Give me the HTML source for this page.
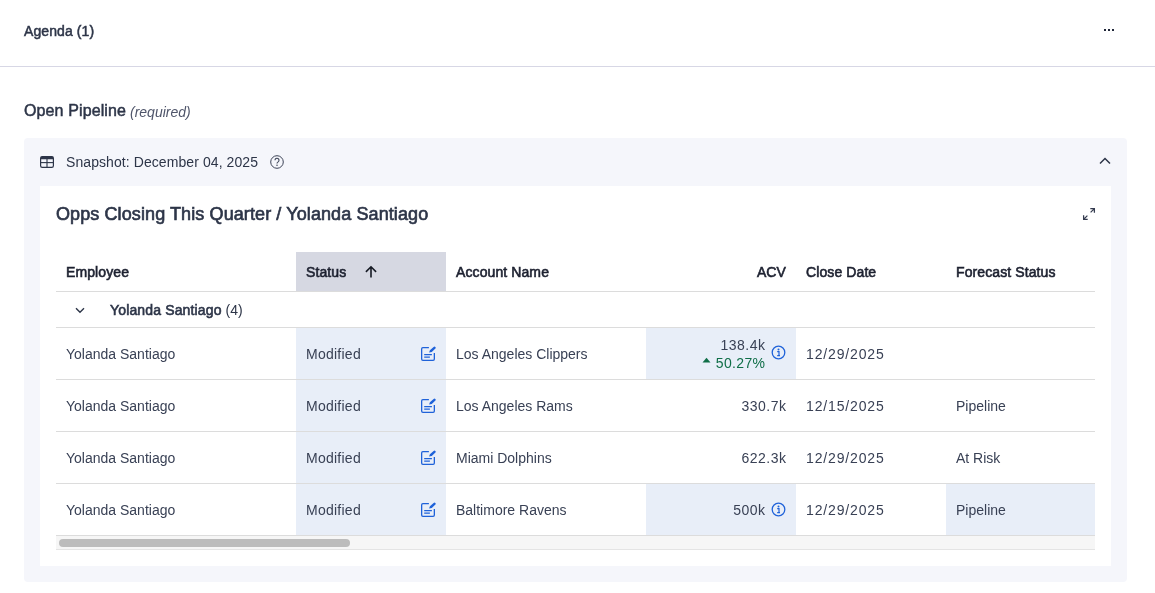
<!DOCTYPE html>
<html><head><meta charset="utf-8">
<style>
*{box-sizing:border-box;margin:0;padding:0}
html,body{width:1155px;height:593px;overflow:hidden;background:#fff;font-family:"Liberation Sans",sans-serif;color:#2d3548}
.abs{position:absolute;white-space:nowrap}
.hd{color:#1d2130;-webkit-text-stroke:0.6px #1d2130 !important}
.b{-webkit-text-stroke:0.5px currentColor;letter-spacing:0.1px}
#hdrline{position:absolute;left:0;top:66px;width:1155px;height:1px;background:#d7d7e5}
#panel{position:absolute;left:24px;top:138px;width:1103px;height:444px;background:#f5f6fb;border-radius:4px}
#card{position:absolute;left:40px;top:186px;width:1071px;height:380px;background:#fff}
.hline{position:absolute;height:1px;background:#dcdcdc}
.col{position:absolute}
.t14{font-size:14px;line-height:16px}
.c{color:#394155}
</style></head><body><div id="wrap" style="position:absolute;left:0;top:0;width:1155px;height:593px;will-change:transform">
<div class="abs b t14" style="left:24px;top:23px">Agenda (1)</div>
<svg class="abs" style="left:1103px;top:28px" width="12" height="4" viewBox="0 0 12 4"><rect x="1" y="1" width="2" height="2" fill="#1f2638"/><rect x="5" y="1" width="2" height="2" fill="#1f2638"/><rect x="9" y="1" width="2" height="2" fill="#1f2638"/></svg>
<div id="hdrline"></div>

<div class="abs b" style="left:24px;top:102px;font-size:16px;line-height:18px;letter-spacing:0.12px">Open Pipeline</div>
<div class="abs" style="left:130px;top:103px;font-size:14px;line-height:18px;font-style:italic;color:#4f556a">(required)</div>

<div id="panel"></div>
<!-- snapshot row -->
<svg class="abs" style="left:40px;top:156px" width="14" height="12" viewBox="0 0 14 12">
  <rect x="0.6" y="0.6" width="12.8" height="10.8" rx="1.6" fill="none" stroke="#2d3548" stroke-width="1.2"/>
  <path d="M0.6 3.3V2.2A1.6 1.6 0 0 1 2.2 0.6H11.8A1.6 1.6 0 0 1 13.4 2.2V3.3z" fill="#2d3548"/>
  <line x1="0.6" y1="6.6" x2="13.4" y2="6.6" stroke="#2d3548" stroke-width="1.1"/>
  <line x1="7" y1="3" x2="7" y2="11.4" stroke="#2d3548" stroke-width="1.1"/>
</svg>
<div class="abs t14" style="left:66px;top:154px;letter-spacing:0.08px">Snapshot: December 04, 2025</div>
<svg class="abs" style="left:270px;top:155px" width="14" height="14" viewBox="0 0 14 14">
  <circle cx="7" cy="7" r="6.3" fill="none" stroke="#3d4457" stroke-width="1"/>
  <path d="M5 5.3A2 2 0 1 1 8.1 6.9C7.3 7.4 7 7.8 7 8.6" fill="none" stroke="#3d4457" stroke-width="1.1"/>
  <circle cx="7" cy="10.2" r="0.75" fill="#3d4457"/>
</svg>
<svg class="abs" style="left:1099px;top:157px" width="12" height="8" viewBox="0 0 12 8">
  <polyline points="1,6.5 6,1.5 11,6.5" fill="none" stroke="#2d3548" stroke-width="1.5"/>
</svg>

<div id="card"></div>
<div class="abs b" style="left:56px;top:204px;font-size:18px;line-height:20px;-webkit-text-stroke:0.65px #2d3548;color:#2d3548">Opps Closing This Quarter / Yolanda Santiago</div>
<svg class="abs" style="left:1082px;top:207px" width="14" height="14" viewBox="0 0 14 14">
  <path d="M8.3 1.6h4.1v4.1M12.4 1.6L8.6 5.4M5.7 12.4H1.6V8.3M1.6 12.4l3.8-3.8" fill="none" stroke="#353c50" stroke-width="1.25"/>
</svg>

<!-- table -->
<div style="position:absolute;left:296px;top:252px;width:150px;height:39px;background:#d6d8e2"></div>
<div class="abs b t14 hd" style="left:66px;top:264px">Employee</div>
<div class="abs b t14 hd" style="left:306px;top:264px">Status</div>
<svg class="abs" style="left:365px;top:265px" width="12" height="13" viewBox="0 0 12 13"><path d="M6 12.5V1.8M0.9 6.9L6 1.8 11.1 6.9" fill="none" stroke="#161a24" stroke-width="1.6"/></svg>
<div class="abs b t14 hd" style="left:456px;top:264px">Account Name</div>
<div class="abs b t14 hd" style="left:756px;top:264px;width:30px;text-align:right">ACV</div>
<div class="abs b t14 hd" style="left:806px;top:264px">Close Date</div>
<div class="abs b t14 hd" style="left:956px;top:264px">Forecast Status</div>
<div class="hline" style="left:56px;top:291px;width:1039px"></div>

<svg class="abs" style="left:74px;top:306px" width="12" height="8" viewBox="0 0 12 8">
  <polyline points="2,2.2 6,6.2 10,2.2" fill="none" stroke="#2d3548" stroke-width="1.4"/>
</svg>
<div class="abs t14" style="left:110px;top:302px"><span class="b" style="-webkit-text-stroke:0.6px #2d3548;letter-spacing:0.15px">Yolanda Santiago</span> (4)</div>
<div class="hline" style="left:56px;top:327px;width:1039px"></div>

<div style="position:absolute;left:296px;top:328px;width:150px;height:51px;background:#e8eef8"></div>
<div style="position:absolute;left:646px;top:328px;width:150px;height:51px;background:#e8eef8"></div>
<div class="abs t14 c" style="left:66px;top:346px">Yolanda Santiago</div>
<div class="abs t14 c" style="left:306px;top:346px;letter-spacing:0.25px">Modified</div>
<svg class="abs" style="left:420px;top:346px" width="16" height="16" viewBox="0 0 16 16"><path d="M8.9 1.65H2.9A1.25 1.25 0 0 0 1.65 2.9V13.1A1.25 1.25 0 0 0 2.9 14.35H13.1A1.25 1.25 0 0 0 14.35 13.1V7" fill="none" stroke="#1f62d9" stroke-width="1.3"/><path d="M9.1 6.5L9.9 4.2 13.6 1.0A1.1 1.1 0 0 1 15.4 2.6L11.8 5.9z" fill="#1f62d9"/><path d="M4.2 8.6h7.7M4.2 11.1h5.7" stroke="#1f62d9" stroke-width="1.2"/></svg>
<div class="abs t14 c" style="left:456px;top:346px">Los Angeles Clippers</div>
<div class="abs t14 c" style="left:686px;top:337px;width:79px;text-align:right"><span style="letter-spacing:0.5px;margin-right:-0.5px">138.4k</span></div>
<svg class="abs" style="left:702px;top:357px" width="9" height="6" viewBox="0 0 9 6"><path d="M0.5 5.5L4.5 0.8 8.5 5.5z" fill="#0f6e47"/></svg>
<div class="abs t14" style="left:686px;top:355px;width:79px;text-align:right;color:#0f6e47"><span style="letter-spacing:0.35px;margin-right:-0.35px">50.27%</span></div>
<svg class="abs" style="left:771px;top:345px" width="15" height="15" viewBox="0 0 15 15"><circle cx="7.5" cy="7.5" r="6.3" fill="none" stroke="#1f62d9" stroke-width="1.3"/><circle cx="7.5" cy="4.6" r="1" fill="#1f62d9"/><path d="M6.2 6.7h1.8v3.6M6.2 10.6h2.8" fill="none" stroke="#1f62d9" stroke-width="1.2"/></svg>
<div class="abs t14 c" style="left:806px;top:346px;letter-spacing:0.85px">12/29/2025</div>
<div class="hline" style="left:56px;top:379px;width:1039px"></div>
<div style="position:absolute;left:296px;top:380px;width:150px;height:51px;background:#e8eef8"></div>
<div class="abs t14 c" style="left:66px;top:398px">Yolanda Santiago</div>
<div class="abs t14 c" style="left:306px;top:398px;letter-spacing:0.25px">Modified</div>
<svg class="abs" style="left:420px;top:398px" width="16" height="16" viewBox="0 0 16 16"><path d="M8.9 1.65H2.9A1.25 1.25 0 0 0 1.65 2.9V13.1A1.25 1.25 0 0 0 2.9 14.35H13.1A1.25 1.25 0 0 0 14.35 13.1V7" fill="none" stroke="#1f62d9" stroke-width="1.3"/><path d="M9.1 6.5L9.9 4.2 13.6 1.0A1.1 1.1 0 0 1 15.4 2.6L11.8 5.9z" fill="#1f62d9"/><path d="M4.2 8.6h7.7M4.2 11.1h5.7" stroke="#1f62d9" stroke-width="1.2"/></svg>
<div class="abs t14 c" style="left:456px;top:398px">Los Angeles Rams</div>
<div class="abs t14 c" style="left:686px;top:398px;width:100px;text-align:right"><span style="letter-spacing:0.5px;margin-right:-0.5px">330.7k</span></div>
<div class="abs t14 c" style="left:806px;top:398px;letter-spacing:0.85px">12/15/2025</div>
<div class="abs t14 c" style="left:956px;top:398px">Pipeline</div>
<div class="hline" style="left:56px;top:431px;width:1039px"></div>
<div style="position:absolute;left:296px;top:432px;width:150px;height:51px;background:#e8eef8"></div>
<div class="abs t14 c" style="left:66px;top:450px">Yolanda Santiago</div>
<div class="abs t14 c" style="left:306px;top:450px;letter-spacing:0.25px">Modified</div>
<svg class="abs" style="left:420px;top:450px" width="16" height="16" viewBox="0 0 16 16"><path d="M8.9 1.65H2.9A1.25 1.25 0 0 0 1.65 2.9V13.1A1.25 1.25 0 0 0 2.9 14.35H13.1A1.25 1.25 0 0 0 14.35 13.1V7" fill="none" stroke="#1f62d9" stroke-width="1.3"/><path d="M9.1 6.5L9.9 4.2 13.6 1.0A1.1 1.1 0 0 1 15.4 2.6L11.8 5.9z" fill="#1f62d9"/><path d="M4.2 8.6h7.7M4.2 11.1h5.7" stroke="#1f62d9" stroke-width="1.2"/></svg>
<div class="abs t14 c" style="left:456px;top:450px">Miami Dolphins</div>
<div class="abs t14 c" style="left:686px;top:450px;width:100px;text-align:right"><span style="letter-spacing:0.5px;margin-right:-0.5px">622.3k</span></div>
<div class="abs t14 c" style="left:806px;top:450px;letter-spacing:0.85px">12/29/2025</div>
<div class="abs t14 c" style="left:956px;top:450px">At Risk</div>
<div class="hline" style="left:56px;top:483px;width:1039px"></div>
<div style="position:absolute;left:296px;top:484px;width:150px;height:51px;background:#e8eef8"></div>
<div style="position:absolute;left:646px;top:484px;width:150px;height:51px;background:#e8eef8"></div>
<div style="position:absolute;left:946px;top:484px;width:149px;height:51px;background:#e8eef8"></div>
<div class="abs t14 c" style="left:66px;top:502px">Yolanda Santiago</div>
<div class="abs t14 c" style="left:306px;top:502px;letter-spacing:0.25px">Modified</div>
<svg class="abs" style="left:420px;top:502px" width="16" height="16" viewBox="0 0 16 16"><path d="M8.9 1.65H2.9A1.25 1.25 0 0 0 1.65 2.9V13.1A1.25 1.25 0 0 0 2.9 14.35H13.1A1.25 1.25 0 0 0 14.35 13.1V7" fill="none" stroke="#1f62d9" stroke-width="1.3"/><path d="M9.1 6.5L9.9 4.2 13.6 1.0A1.1 1.1 0 0 1 15.4 2.6L11.8 5.9z" fill="#1f62d9"/><path d="M4.2 8.6h7.7M4.2 11.1h5.7" stroke="#1f62d9" stroke-width="1.2"/></svg>
<div class="abs t14 c" style="left:456px;top:502px">Baltimore Ravens</div>
<div class="abs t14 c" style="left:686px;top:502px;width:79px;text-align:right"><span style="letter-spacing:0.5px;margin-right:-0.5px">500k</span></div>
<svg class="abs" style="left:771px;top:502px" width="15" height="15" viewBox="0 0 15 15"><circle cx="7.5" cy="7.5" r="6.3" fill="none" stroke="#1f62d9" stroke-width="1.3"/><circle cx="7.5" cy="4.6" r="1" fill="#1f62d9"/><path d="M6.2 6.7h1.8v3.6M6.2 10.6h2.8" fill="none" stroke="#1f62d9" stroke-width="1.2"/></svg>
<div class="abs t14 c" style="left:806px;top:502px;letter-spacing:0.85px">12/29/2025</div>
<div class="abs t14 c" style="left:956px;top:502px">Pipeline</div>
<div class="hline" style="left:56px;top:535px;width:1039px"></div>
<div style="position:absolute;left:56px;top:536px;width:1039px;height:14px;background:#f6f6f6;border-bottom:1px solid #e4e4e4"></div>
<div style="position:absolute;left:59px;top:539px;width:291px;height:8px;background:#bcbcbc;border-radius:4px"></div>

</div></body></html>
